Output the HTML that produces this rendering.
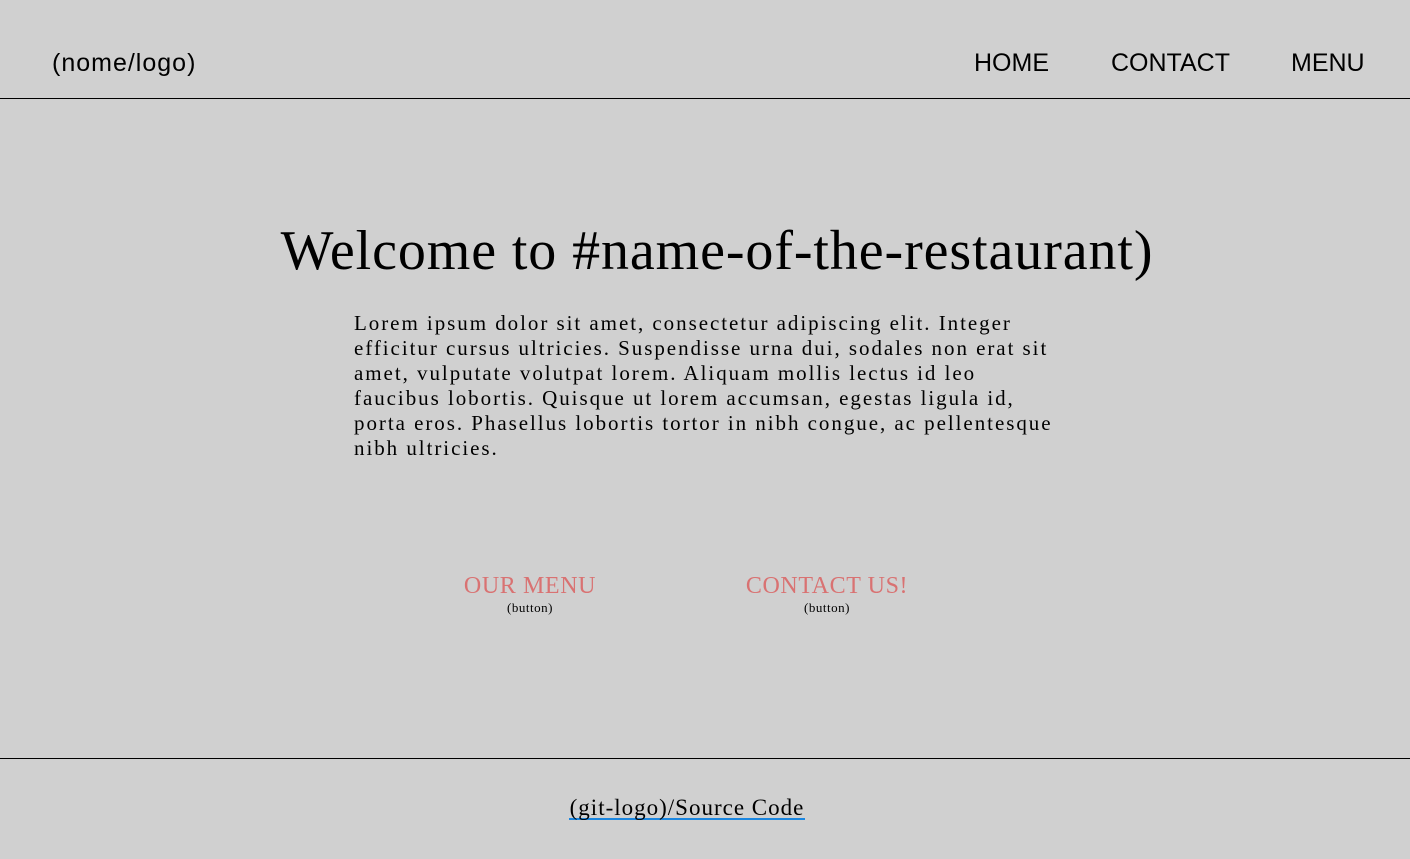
<!DOCTYPE html>
<html><head><style>
html,body{margin:0;padding:0;background:#d0d0d0;width:1410px;height:859px;overflow:hidden;position:relative}
.hdr{position:absolute;left:0;top:0;width:1410px;height:98px;border-bottom:1px solid #000}
.hdr span{position:absolute;top:49px;font:25px "Liberation Sans",sans-serif;color:#000}
h1{position:absolute;top:218px;left:12px;width:1410px;text-align:center;margin:0;font:normal 56px/66px "Liberation Serif",serif;color:#000;letter-spacing:0.9px}
p{position:absolute;left:354px;top:311px;width:800px;margin:0;font:21px/25px "Liberation Serif",serif;color:#000;white-space:nowrap;letter-spacing:1.95px}
.btn{position:absolute;top:573px;text-align:center;font:24px "Liberation Serif",serif;color:#d97272;letter-spacing:0.6px}
.btn small{display:block;font-size:13px;color:#000;line-height:16px;margin-top:0;letter-spacing:0.5px}
.ftr{position:absolute;left:0;top:758px;width:1410px;border-top:1px solid #000}
a{position:absolute;top:798px;left:569px;width:236px;text-align:center;font:23px "Liberation Serif",serif;color:#000;text-decoration:none;border-bottom:2px solid #1a86e0;line-height:20px;white-space:nowrap;letter-spacing:1px}
</style></head><body>
<div class="hdr">
<span style="left:52px;letter-spacing:1px">(nome/logo)</span>
<span style="left:974px">HOME</span>
<span style="left:1111px">CONTACT</span>
<span style="left:1291px">MENU</span>
</div>
<h1>Welcome to #name-of-the-restaurant)</h1>
<p>Lorem ipsum dolor sit amet, consectetur adipiscing elit. Integer<br>efficitur cursus ultricies. Suspendisse urna dui, sodales non erat sit<br>amet, vulputate volutpat lorem. Aliquam mollis lectus id leo<br>faucibus lobortis. Quisque ut lorem accumsan, egestas ligula id,<br>porta eros. Phasellus lobortis tortor in nibh congue, ac pellentesque<br>nibh ultricies.</p>
<div class="btn" style="left:440px;width:180px">OUR MENU<small>(button)</small></div>
<div class="btn" style="left:727px;width:200px">CONTACT US!<small>(button)</small></div>
<div class="ftr"></div>
<a href="#">(git-logo)/Source Code</a>
</body></html>
